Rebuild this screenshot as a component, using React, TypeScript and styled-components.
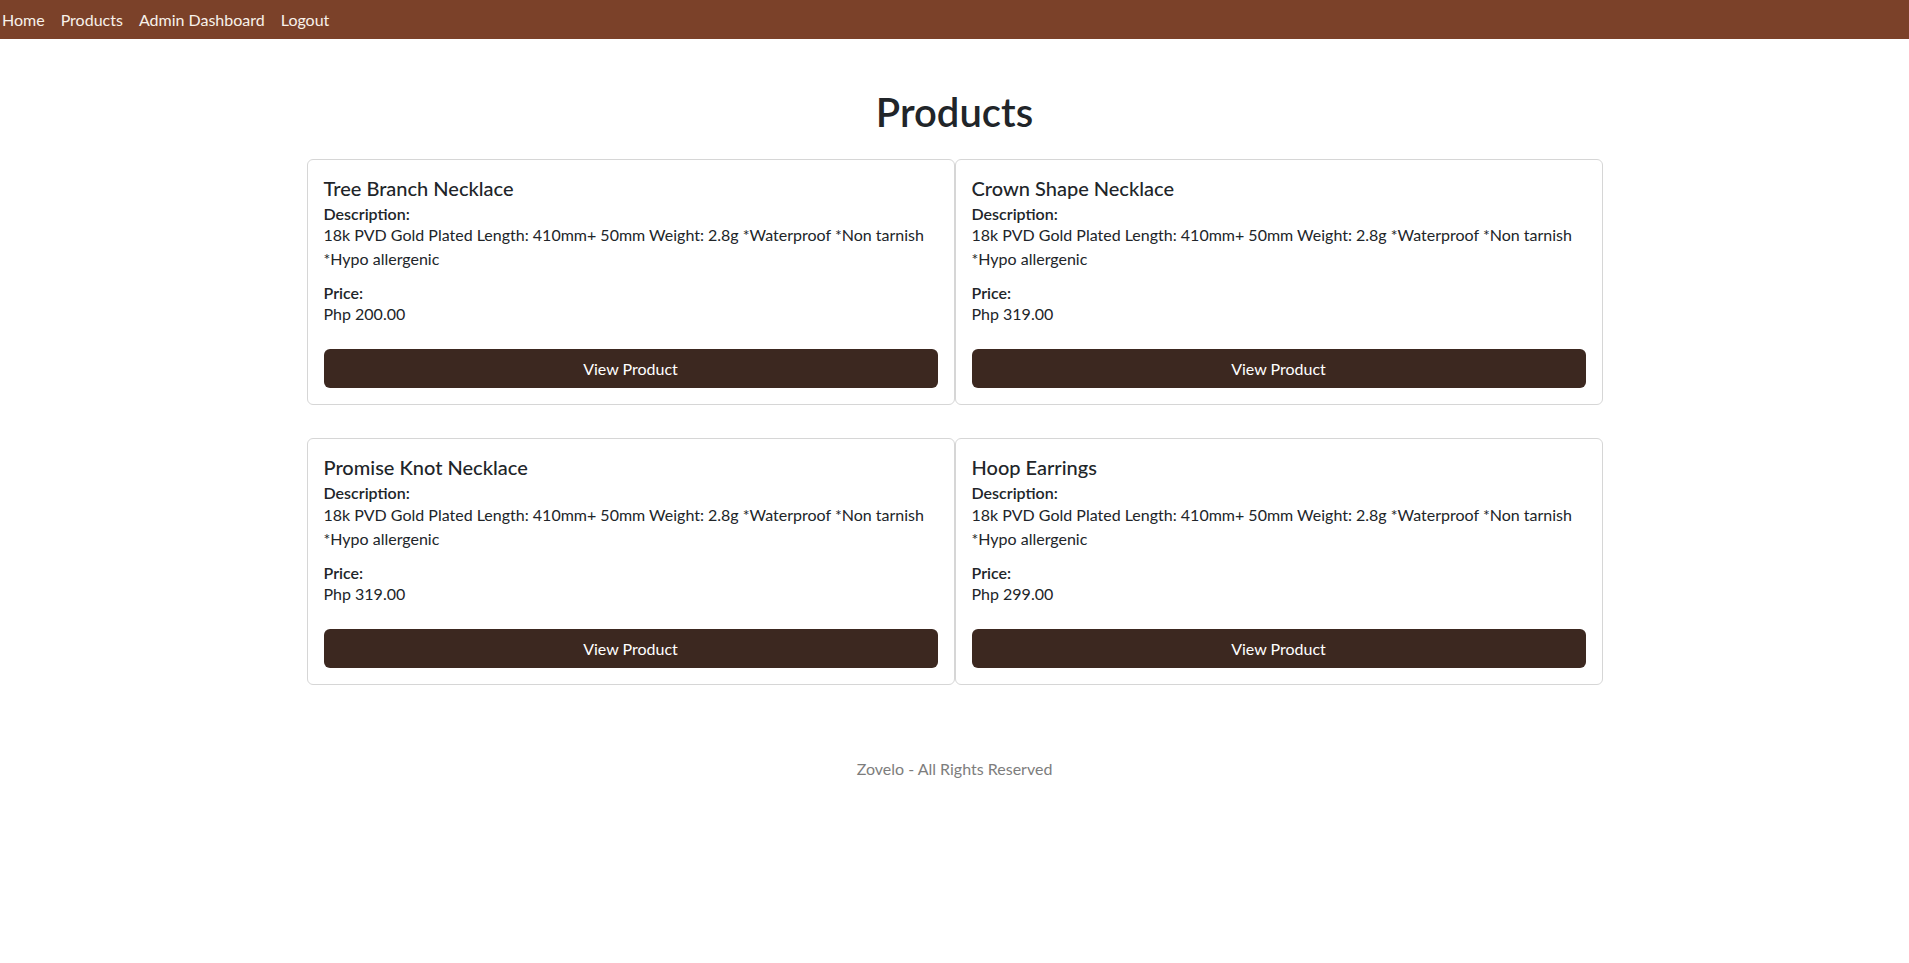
import React from "react";
import styled, { createGlobalStyle } from "styled-components";

const GlobalStyle = createGlobalStyle`
  * { box-sizing: border-box; }
  body {
    margin: 0;
    background: #fff;
    font-family: Lato, "Open Sans", sans-serif;
    font-size: 16px;
    line-height: 1.5;
    color: #212529;
  }
`;

const NavBar = styled.nav`
  height: 39px;
  background: #7b4129;
  display: flex;
  align-items: center;
  gap: 16px;
  padding-left: 2px;
`;

const NavLink = styled.a`
  color: #f8f1ea;
  text-decoration: none;
  font-size: 16px;
  line-height: 24px;
`;

const Container = styled.main`
  width: 1296px;
  margin: 0 auto;
`;

const Title = styled.h1`
  margin: 49px 0 23px;
  text-align: center;
  font-size: 40px;
  font-weight: 600;
  line-height: 1.2;
  color: #212529;
`;

const Grid = styled.div`
  display: grid;
  grid-template-columns: 1fr 1fr;
  row-gap: 33px;
`;

const Card = styled.div`
  border: 1px solid #d6d6d6;
  border-radius: 6px;
  padding: 16px;
  background: #fff;
  display: flex;
  flex-direction: column;
`;

const CardTitle = styled.h5`
  margin: 0 0 8px;
  font-size: 20px;
  font-weight: 500;
  line-height: 1.2;
`;

const Label = styled.h6`
  margin: -4px 0 0;
  font-size: 16px;
  font-weight: 600;
  line-height: 1.2;
`;

const Text = styled.p`
  margin: 0 0 16px;
  font-size: 16px;
  line-height: 24px;
`;

const Button = styled.button`
  margin-top: 7px;
  width: 100%;
  height: 39px;
  border: none;
  border-radius: 6px;
  background: #3c2820;
  color: #fff;
  font-family: inherit;
  font-size: 16px;
  cursor: pointer;
`;

const Footer = styled.footer`
  margin-top: 72px;
  text-align: center;
  color: #7d7d7d;
  font-size: 16px;
`;

const desc =
  "18k PVD Gold Plated Length: 410mm+ 50mm Weight: 2.8g *Waterproof *Non tarnish *Hypo allergenic";

const products = [
  { name: "Tree Branch Necklace", price: "Php 200.00" },
  { name: "Crown Shape Necklace", price: "Php 319.00" },
  { name: "Promise Knot Necklace", price: "Php 319.00" },
  { name: "Hoop Earrings", price: "Php 299.00" },
];

export default function App() {
  return (
    <>
      <GlobalStyle />
      <NavBar>
        <NavLink href="#">Home</NavLink>
        <NavLink href="#">Products</NavLink>
        <NavLink href="#">Admin Dashboard</NavLink>
        <NavLink href="#">Logout</NavLink>
      </NavBar>
      <Container>
        <Title>Products</Title>
        <Grid>
          {products.map((p) => (
            <Card key={p.name}>
              <CardTitle>{p.name}</CardTitle>
              <Label>Description:</Label>
              <Text>{desc}</Text>
              <Label>Price:</Label>
              <Text>{p.price}</Text>
              <Button>View Product</Button>
            </Card>
          ))}
        </Grid>
        <Footer>Zovelo - All Rights Reserved</Footer>
      </Container>
    </>
  );
}
